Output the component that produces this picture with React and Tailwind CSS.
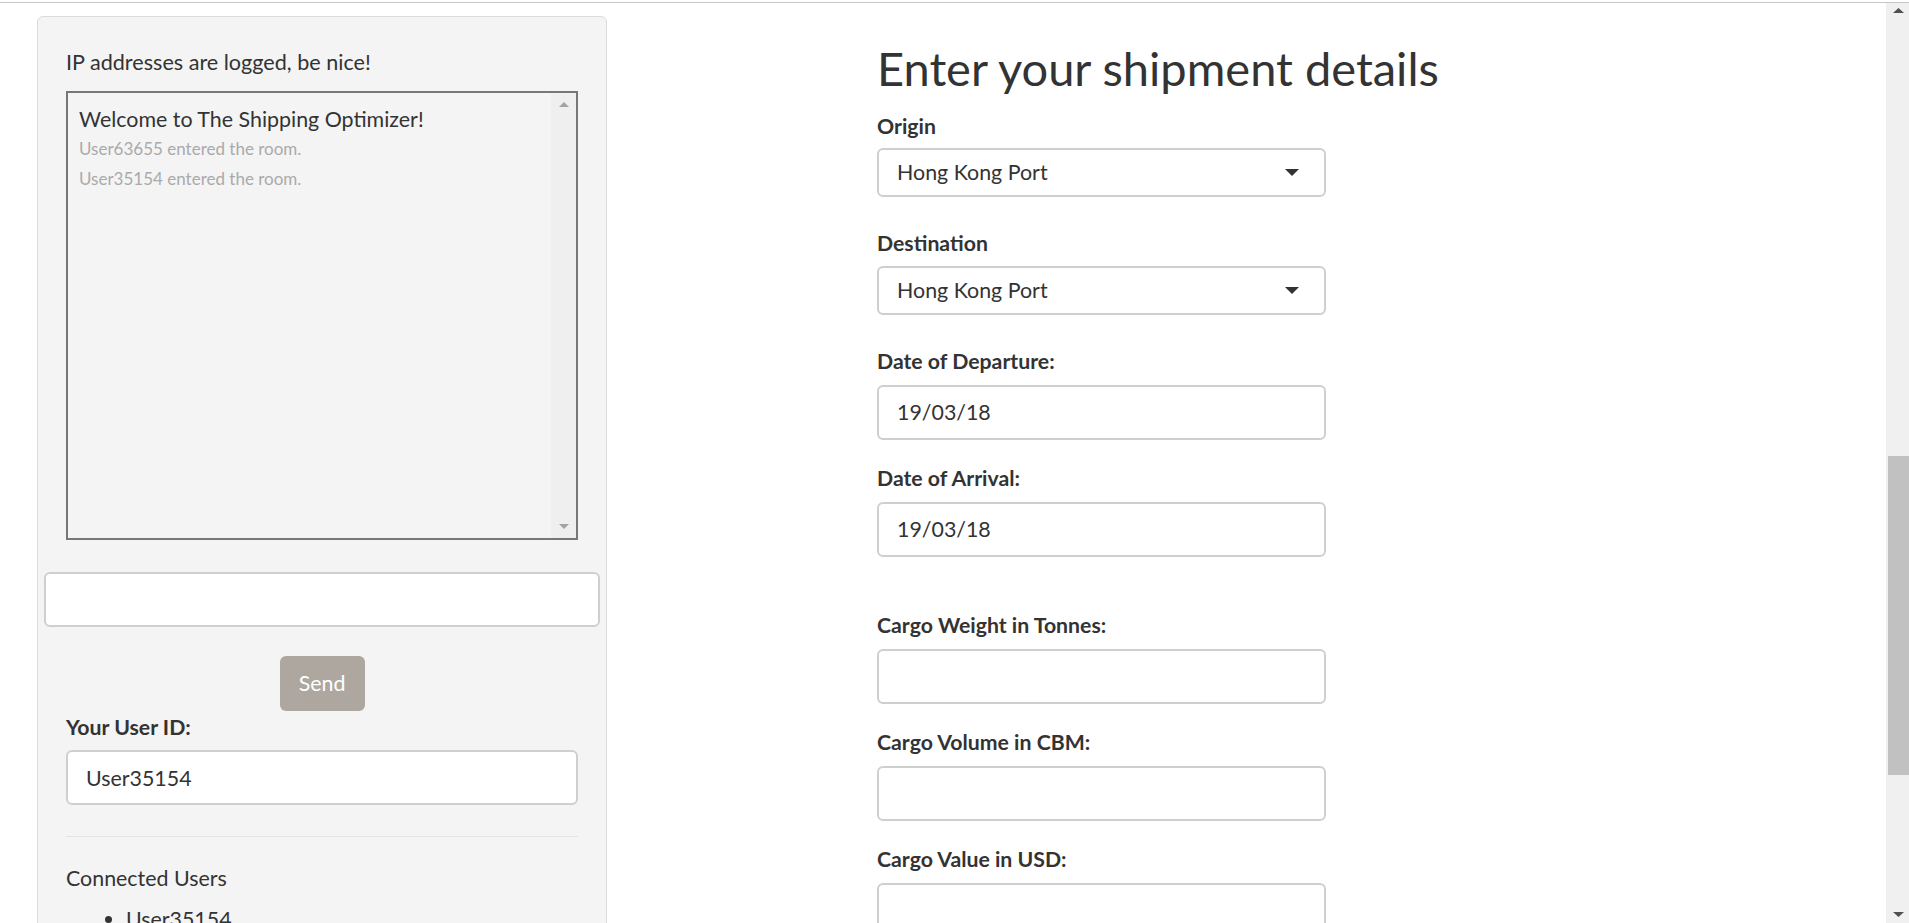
import React from "react";

function Caret() {
  return (
    <svg width="14" height="7" viewBox="0 0 14 7">
      <path d="M0 0 L14 0 L7 7 Z" fill="#333" />
    </svg>
  );
}

function SelectBox({ value }) {
  return (
    <div className="h-[49px] w-[449px] rounded-[6px] border-2 border-[#cfcfcf] bg-white flex items-center justify-between pl-[18px] pr-[25px] text-[21.4px] leading-[30px] text-[#333]">
      <span>{value}</span>
      <Caret />
    </div>
  );
}

function TextBox({ value, className = "" }) {
  return (
    <div className={"h-[55px] rounded-[6px] border-2 border-[#cfcfcf] bg-white flex items-center pl-[18px] text-[21.4px] leading-[30px] text-[#333] " + className}>
      {value}
    </div>
  );
}

function Label({ children, className = "" }) {
  return <div className={"whitespace-nowrap text-[21.25px] leading-[30px] font-bold text-[#333] " + className}>{children}</div>;
}

export default function App() {
  return (
    <div className="relative w-[1909px] h-[923px] overflow-hidden bg-white [font-family:Lato,sans-serif] text-[#333]">
      <div className="h-[2px] bg-white" />
      <div className="h-px bg-[#c6c6c6]" />
      <div className="flex h-[920px]">
        <div className="flex-1 flex overflow-hidden">
          {/* Left column: chat panel */}
          <div className="w-[607px] shrink-0 pl-[37px] pt-[13px]">
            <div className="w-[570px] h-[1000px] rounded-[6px] border border-[#dcdcdc] bg-[#f4f4f4]">
              <div className="px-[28px] pt-[30px] text-[21.6px] leading-[30px]">IP addresses are logged, be nice!</div>
              <div className="mx-[28px] mt-[14px] h-[449px] border-2 border-[#777] flex">
                <div className="flex-1 pl-[11px] pt-[11px]">
                  <div className="text-[21.4px] leading-[30px]">Welcome to The Shipping Optimizer!</div>
                  <div className="text-[17px] leading-[30px] text-[#aaa]">User63655 entered the room.</div>
                  <div className="text-[17px] leading-[30px] text-[#aaa]">User35154 entered the room.</div>
                </div>
                <div className="w-[25px] bg-[#efefef] flex flex-col items-center justify-between py-[9px]">
                  <svg width="10" height="5" viewBox="0 0 10 5"><path d="M0 5 L10 5 L5 0 Z" fill="#a3a3a3" /></svg>
                  <svg width="10" height="5" viewBox="0 0 10 5"><path d="M0 0 L10 0 L5 5 Z" fill="#a3a3a3" /></svg>
                </div>
              </div>
              <div className="mx-[6px] mt-[32px] h-[55px] rounded-[6px] border-2 border-[#cfcfcf] bg-white" />
              <div className="mt-[29px] mx-auto w-[85px] h-[55px] rounded-[6px] bg-[#aea79f] text-white text-[21.4px] flex items-center justify-center">Send</div>
              <Label className="px-[28px] mt-[1px]">Your User ID:</Label>
              <TextBox value="User35154" className="mx-[28px] mt-[8px]" />
              <div className="mx-[28px] mt-[31px] h-px bg-[#e4e4e4]" />
              <div className="px-[28px] mt-[26px] text-[21.4px] leading-[30px]">Connected Users</div>
              <ul className="mt-[11px] pl-[88px] list-disc text-[21.4px] leading-[30px]">
                <li>User35154</li>
              </ul>
            </div>
          </div>
          {/* Right column: shipment form */}
          <div className="ml-[270px] w-[449px] shrink-0">
            <h2 className="mt-[41px] whitespace-nowrap text-[47px] leading-[49.5px] font-normal">Enter your shipment details</h2>
            <Label className="mt-[17px]">Origin</Label>
            <div className="mt-[7px]"><SelectBox value="Hong Kong Port" /></div>
            <Label className="mt-[31px]">Destination</Label>
            <div className="mt-[8px]"><SelectBox value="Hong Kong Port" /></div>
            <Label className="mt-[31px]">Date of Departure:</Label>
            <TextBox value="19/03/18" className="mt-[9px]" />
            <Label className="mt-[23px]">Date of Arrival:</Label>
            <TextBox value="19/03/18" className="mt-[9px]" />
            <Label className="mt-[53px]">Cargo Weight in Tonnes:</Label>
            <TextBox value="" className="mt-[9px]" />
            <Label className="mt-[23px]">Cargo Volume in CBM:</Label>
            <TextBox value="" className="mt-[9px]" />
            <Label className="mt-[23px]">Cargo Value in USD:</Label>
            <TextBox value="" className="mt-[9px]" />
          </div>
        </div>
        {/* Page scrollbar */}
        <div className="w-[23px] shrink-0 bg-[#f0f0f0] flex flex-col">
          <div className="h-[14px] flex items-center justify-center pl-[1px]">
            <svg width="11" height="5" viewBox="0 0 11 5"><path d="M0 5 L11 5 L5.5 0 Z" fill="#505050" /></svg>
          </div>
          <div className="h-[439px]" />
          <div className="ml-[2px] h-[319px] bg-[#c1c1c1]" />
          <div className="flex-1" />
          <div className="h-[14px] flex items-center justify-center pl-[1px] mb-[2px]">
            <svg width="11" height="5" viewBox="0 0 11 5"><path d="M0 0 L11 0 L5.5 5 Z" fill="#505050" /></svg>
          </div>
        </div>
      </div>
    </div>
  );
}
